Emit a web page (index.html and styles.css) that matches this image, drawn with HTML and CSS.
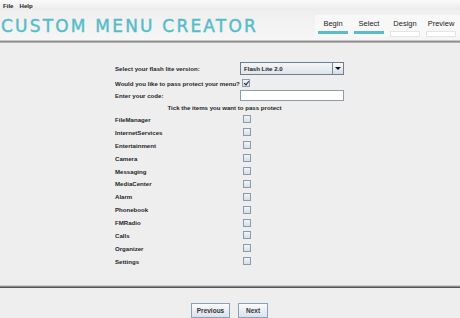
FILE: index.html
```html
<!DOCTYPE html>
<html>
<head>
<meta charset="utf-8">
<link rel="stylesheet" href="styles.css">
</head>
<body>
<div class="menubar"><span>File</span><span>Help</span></div>
<div class="header">
  <div class="title">CUSTOM MENU CREATOR</div>
  <div class="steps">
    <div class="step"><span>Begin</span><i class="bar done"></i></div>
    <div class="step"><span>Select</span><i class="bar done"></i></div>
    <div class="step"><span>Design</span><i class="bar"></i></div>
    <div class="step"><span>Preview</span><i class="bar"></i></div>
  </div>
</div>
<div class="sep top"></div>
<div class="main">
  <div class="form">
    <div class="row r-select"><label>Select your flash lite version:</label><div class="combo"><span>Flash Lite 2.0</span><b class="arrow"></b></div></div>
    <div class="row r-check"><label>Would you like to pass protect your menu?</label><i class="cb checked"></i></div>
    <div class="row r-code"><label>Enter your code:</label><div class="input"></div></div>
    <div class="tick">Tick the items you want to pass protect</div>
    <div class="items">
      <div class="row item"><label>FileManager</label><i class="cb"></i></div>
      <div class="row item"><label>InternetServices</label><i class="cb"></i></div>
      <div class="row item"><label>Entertainment</label><i class="cb"></i></div>
      <div class="row item"><label>Camera</label><i class="cb"></i></div>
      <div class="row item"><label>Messaging</label><i class="cb"></i></div>
      <div class="row item"><label>MediaCenter</label><i class="cb"></i></div>
      <div class="row item"><label>Alarm</label><i class="cb"></i></div>
      <div class="row item"><label>Phonebook</label><i class="cb"></i></div>
      <div class="row item"><label>FMRadio</label><i class="cb"></i></div>
      <div class="row item"><label>Calls</label><i class="cb"></i></div>
      <div class="row item"><label>Organizer</label><i class="cb"></i></div>
      <div class="row item"><label>Settings</label><i class="cb"></i></div>
    </div>
  </div>
</div>
<div class="sep bottom"></div>
<div class="buttons">
  <button class="btn prev">Previous</button>
  <button class="btn next">Next</button>
</div>
</body>
</html>
```
FILE: styles.css
```css
* { box-sizing: border-box; }
html, body { margin: 0; padding: 0; }
body {
  width: 460px;
  height: 318px;
  overflow: hidden;
  background: #eeeeee;
  font-family: "Liberation Sans", Arial, sans-serif;
  font-weight: bold;
  font-size: 6.1px;
  color: #262626;
  white-space: nowrap;
}
.menubar {
  height: 10px;
  display: flex;
  align-items: center;
  gap: 6px;
  padding-left: 3px;
  background: linear-gradient(#fafafa, #ebebeb);
  color: #222;
}
.header {
  height: 30px;
  display: flex;
  justify-content: space-between;
  align-items: center;
  background: linear-gradient(#efefef, #f6f6f6);
}
.title {
  font-family: "DejaVu Sans", sans-serif;
  font-weight: normal;
  font-size: 17px;
  letter-spacing: 2.2px;
  color: #55bccb;
  -webkit-text-stroke: 0.4px #55bccb;
  padding-left: 1px;
  margin-top: 1px;
}
.steps {
  display: flex;
  gap: 6px;
  align-self: flex-end;
  height: 22px;
  padding: 3px 4px 0 3px;
  background: #f8f8f8;
  margin-bottom: 3px;
}
.step {
  width: 30px;
  display: flex;
  flex-direction: column;
  align-items: center;
  font-family: "Liberation Sans", Arial, sans-serif;
  font-weight: normal;
  font-size: 7.5px;
  color: #222;
}
.step span { height: 12px; line-height: 12px; }
.bar {
  display: block;
  width: 30px;
  height: 6px;
  margin-top: 1px;
  background: #ffffff;
  border: 1px solid #e4e4e4;
}
.bar.done {
  height: 3px;
  background: #5bbdcc;
  border: none;
}
.sep {
  height: 3px;
}
.sep.top {
  border-top: 1px solid #c8c8c8;
  background: #8d8d8d;
  border-bottom: 1px solid #b2b2b2;
}
.main {
  height: 242px;
  padding-top: 19px;
}
.form {
  margin-left: 115px;
  width: 229px;
}
.row {
  display: flex;
  align-items: center;
}
.row label {
  width: 125px;
  flex: none;
}
.r-select { height: 13px; }
.r-check { height: 14px; margin-top: 1px; }
.r-code { height: 11px; margin-top: 0; }
.combo {
  width: 104px;
  height: 13px;
  border: 1px solid #6f7f8f;
  background: linear-gradient(#f4f6f8, #dfe5eb);
  display: flex;
  align-items: center;
  justify-content: space-between;
  padding-left: 3px;
  color: #222;
}
.arrow {
  width: 11px;
  height: 11px;
  border-left: 1px solid #7a8a9a;
  background: linear-gradient(#fbfcfd, #d5dde5);
  position: relative;
}
.arrow::after {
  content: "";
  position: absolute;
  left: 2px;
  top: 4px;
  border-left: 3px solid transparent;
  border-right: 3px solid transparent;
  border-top: 3px solid #111;
}
.input {
  width: 104px;
  height: 11px;
  background: #fff;
  border: 1px solid #8c9cab;
}
.cb {
  display: block;
  width: 8px;
  height: 8px;
  margin-left: 3px;
  border: 1px solid #8a9bb0;
  background: linear-gradient(#f2f5f8, #d6dee6);
  position: relative;
}
.r-check .cb { margin-left: 2px; }
.cb.checked::after {
  content: "";
  position: absolute;
  left: 2px;
  top: 0px;
  width: 2px;
  height: 4px;
  border-right: 1px solid #222;
  border-bottom: 1px solid #222;
  transform: rotate(40deg);
}
.tick {
  height: 11px;
  line-height: 11px;
  text-align: center;
  margin-left: -10px;
  padding-top: 1px;
}
.items {
  padding-top: 1px;
}
.item {
  height: 12.9px;
}
.sep.bottom {
  border-top: 1px solid #cfcfcf;
  background: #888;
  border-bottom: 1px solid #555;
  height: 3px;
}
.buttons {
  display: flex;
  justify-content: center;
  gap: 8px;
  padding-top: 15px;
  padding-right: 1px;
}
.btn {
  height: 15px;
  padding: 0;
  font-family: "Liberation Sans", Arial, sans-serif;
  font-weight: bold;
  font-size: 6.5px;
  color: #333;
  border: 1px solid #8ea0b4;
  background: linear-gradient(#fbfcfd, #d9e2ec);
}
.prev { width: 39px; }
.next { width: 30px; }
```
